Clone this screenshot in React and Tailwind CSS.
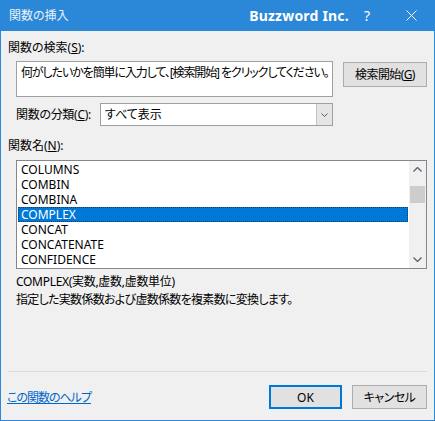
import React from "react";

const items = ["COLUMNS", "COMBIN", "COMBINA", "COMPLEX", "CONCAT", "CONCATENATE", "CONFIDENCE"];

const App = () => {
  const selected = "COMPLEX";

  return (
    <div className="w-[435px] h-[421px] flex flex-col bg-[#f0f0f0] text-[12px] leading-[15px] text-black font-['Noto_Sans','Noto_Sans_CJK_JP',sans-serif] [font-feature-settings:'palt']">
      {/* タイトルバー */}
      <div className="h-[31px] shrink-0 flex items-center bg-[#2b88d8] text-white">
        <span className="pl-[9px] text-[12px] text-[#eaf3fb]">関数の挿入</span>
        <span className="ml-auto text-[14px] font-bold tracking-[0.2px]">Buzzword Inc.</span>
        <span className="ml-[15px] text-[14px]">?</span>
        <span className="ml-[36px] mr-[18px] flex items-center">
          <svg width="11" height="11" viewBox="0 0 11 11">
            <path d="M0.5 0.5 L10.5 10.5 M10.5 0.5 L0.5 10.5" stroke="white" strokeWidth="1" />
          </svg>
        </span>
      </div>

      <div className="flex-1 flex flex-col border-x border-b border-[#2b88d8]">
        <div className="mt-[9px] pl-[7px] h-[15px]">
          関数の検索(<span className="underline">S</span>):
        </div>

        <div className="mt-[6px] flex items-start">
          <div className="ml-[15px] w-[317px] h-[36px] bg-white border border-[#a0a0a0] pl-[4px] pt-[3px] whitespace-nowrap overflow-hidden tracking-[-1.1px]">
            何がしたいかを簡単に入力して、[検索開始] をクリックしてください。
          </div>
          <button className="ml-[10px] mt-[1px] w-[84px] h-[25px] bg-[#e1e1e1] border border-[#adadad] flex items-center justify-center tracking-[-0.6px] whitespace-nowrap">
            検索開始(<span className="underline">G</span>)
          </button>
        </div>

        <div className="mt-[6px] h-[23px] flex items-center">
          <span className="pl-[15px] w-[99px] tracking-[-0.3px] whitespace-nowrap">
            関数の分類(<span className="underline">C</span>):
          </span>
          <div className="w-[233px] h-[23px] bg-white border border-[#a0a0a0] flex items-stretch">
            <span className="flex-1 pl-[4px] flex items-center">すべて表示</span>
            <span className="w-[16px] bg-[#e5e5e5] border-l border-[#c4c4c4] flex items-center justify-center">
              <svg width="7" height="4" viewBox="0 0 7 4">
                <path d="M0.5 0.5 L3.5 3.5 L6.5 0.5" stroke="#5a5a5a" strokeWidth="1" fill="none" />
              </svg>
            </span>
          </div>
        </div>

        <div className="mt-[12px] pl-[7px] h-[15px]">
          関数名(<span className="underline">N</span>):
        </div>

        <div className="mt-[7px] ml-[15px] w-[411px] h-[109px] bg-white border border-[#828790] flex">
          <div className="flex-1 pt-[1px] px-[1px]">
            {items.map((item) => (
              <div
                key={item}
                className={
                  item === selected
                    ? "h-[15px] leading-[15px] pl-[3px] bg-[#0078d7] text-white outline-1 outline-dotted outline-[#1b3c5e] -outline-offset-1"
                    : "h-[15px] leading-[15px] pl-[3px]"
                }
              >
                {item}
              </div>
            ))}
          </div>
          <div className="w-[17px] bg-[#f0f0f0] flex flex-col items-center">
            <div className="h-[17px] flex items-center justify-center">
              <svg width="9" height="5" viewBox="0 0 9 5">
                <path d="M0.5 4.5 L4.5 0.5 L8.5 4.5" stroke="#606060" strokeWidth="1.3" fill="none" />
              </svg>
            </div>
            <div className="mt-[8px] w-[15px] h-[17px] bg-[#cdcdcd]" />
            <div className="flex-1" />
            <div className="h-[17px] flex items-center justify-center">
              <svg width="9" height="5" viewBox="0 0 9 5">
                <path d="M0.5 0.5 L4.5 4.5 L8.5 0.5" stroke="#606060" strokeWidth="1.3" fill="none" />
              </svg>
            </div>
          </div>
        </div>

        <div className="mt-[5px] pl-[15px] h-[15px] tracking-[-0.3px]">COMPLEX(実数,虚数,虚数単位)</div>
        <div className="mt-[3px] pl-[15px] h-[15px] tracking-[-0.7px]">指定した実数係数および虚数係数を複素数に変換します。</div>

        <div className="mt-[64px] ml-[7px] w-[419px] h-px bg-[#dcdcdc]" />

        <div className="mt-[13px] h-[24px] flex items-center">
          <a href="#" className="pl-[6px] text-[#0066cc] underline tracking-[-1px]">
            この関数のヘルプ
          </a>
          <button className="ml-auto w-[73px] h-[24px] bg-[#e1e1e1] border-2 border-[#0078d7] flex items-center justify-center">
            OK
          </button>
          <button className="ml-[10px] mr-[7px] w-[75px] h-[24px] bg-[#e1e1e1] border border-[#adadad] flex items-center justify-center tracking-[-0.5px]">
            キャンセル
          </button>
        </div>
      </div>
    </div>
  );
};

export default App;
